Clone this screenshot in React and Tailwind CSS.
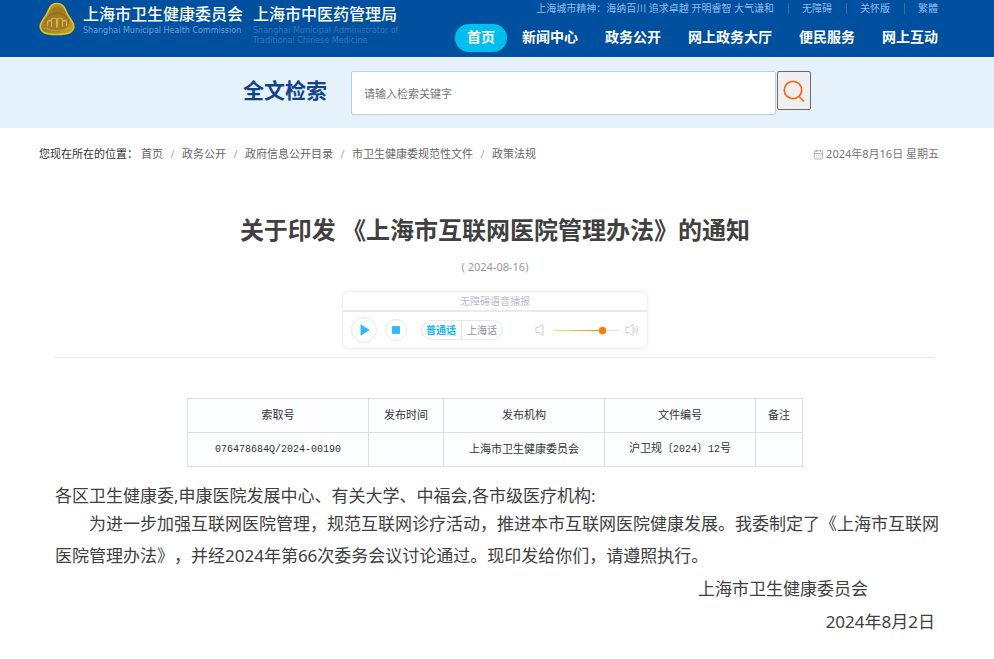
import React from "react";
import { CalendarDays } from "lucide-react";

const topLinks = ["无障碍", "关怀版", "繁體"];
const navItems = ["新闻中心", "政务公开", "网上政务大厅", "便民服务", "网上互动"];
const crumbs = ["首页", "政务公开", "政府信息公开目录", "市卫生健康委规范性文件", "政策法规"];

function Emblem() {
  return (
    <svg viewBox="0 0 36 34" className="mt-[2px] h-[34px] w-[36px] shrink-0" aria-hidden="true">
      <defs>
        <linearGradient id="gold" x1="0" y1="0" x2="1" y2="1">
          <stop offset="0" stopColor="#c9ab2a" />
          <stop offset="0.5" stopColor="#a07a22" />
          <stop offset="1" stopColor="#c9ab2a" />
        </linearGradient>
      </defs>
      <path
        d="M18 1.500C22 1.500 24.500 3.500 26 7C27.500 11 29.500 14.500 32.500 18.500C36 23 35.500 28 31 30.500C27 32.500 22 32.500 18 32.500C14 32.500 9 32.500 5 30.500C.5 28 0 23 3.500 18.500C6.500 14.500 8.500 11 10 7C11.500 3.500 14 1.500 18 1.500Z"
        fill="url(#gold)"
        stroke="#d9c71e"
        strokeWidth="1.600"
      />
      <path d="M18 5Q22 5 24 9Q28 15 30 21Q27 29 18 29.500Q9 29 6 21Q8 15 12 9Q14 5 18 5Z" fill="#a17824" />
      <path d="M6 22Q6 12 18 11Q30 12 30 22" fill="none" stroke="#8d6a1e" strokeWidth="1" />
      <path
        d="M8.500 24V19.500q2-2 4 0V25M12.500 25v-8q2.500-2 5 0v8.500M18.500 25.500V17q2.500-2 5 0v8M23.500 25v-5.500q2-2 4 0V24"
        fill="none"
        stroke="#d6b548"
        strokeWidth="1.200"
      />
      <path d="M5 26Q18 31 31 26" fill="none" stroke="#c8a436" strokeWidth="1" />
    </svg>
  );
}

function Header() {
  return (
    <header className="flex h-[57px] justify-between bg-[#0050a0] pr-14 pl-[39px] text-white">
      <a href="#home" className="flex items-start">
        <Emblem />
        <span className="ml-2 flex flex-col pt-1">
          <span className="text-[16px] leading-5 font-medium">上海市卫生健康委员会</span>
          <span className="font-['DejaVu_Sans',sans-serif] text-[8px] leading-[13px] text-[#6fa3d6]">
            Shanghai Municipal Health Commission
          </span>
        </span>
        <span className="ml-[10px] flex flex-col pt-1">
          <span className="text-[16px] leading-5 font-medium">上海市中医药管理局</span>
          <span className="pt-[2px] font-['DejaVu_Sans',sans-serif] text-[8px] leading-[10px] text-[#3474b6]">
            Shanghai Municipal Administrator of
            <br />
            Traditional Chinese Medicine
          </span>
        </span>
      </a>
      <div className="flex flex-col items-end">
        <div className="flex h-[17px] items-center text-[10px] text-[#8fbcec]">
          <span>上海城市精神：海纳百川 追求卓越 开明睿智 大气谦和</span>
          {topLinks.map((t) => (
            <span key={t} className="flex items-center">
              <span className="mr-[13px] ml-[14px] h-[11px] w-px bg-[#2f70b3]" />
              <a href="#top">{t}</a>
            </span>
          ))}
        </div>
        <nav className="mt-[7px] flex h-7 items-center text-[14px] leading-[26px] font-bold">
          <a href="#home" className="h-7 rounded-full bg-[#00bfee] px-3">
            首页
          </a>
          {navItems.map((t, i) => (
            <a key={t} href="#nav" className={i === 0 ? "ml-[15px] h-7" : "ml-[27px] h-7"}>
              {t}
            </a>
          ))}
        </nav>
      </div>
    </header>
  );
}

function SearchBar() {
  return (
    <form className="flex h-[71px] items-start bg-[#e5f2fc] pt-[14px] pl-[243px] pr-[183px]" onSubmit={(e) => e.preventDefault()}>
      <label htmlFor="q" className="mr-6 shrink-0 text-[21px] leading-[38px] font-bold text-[#10438c]">
        全文检索
      </label>
      <input
        id="q"
        type="text"
        placeholder="请输入检索关键字"
        className="h-11 min-w-0 flex-1 rounded-[2px] border border-[#b5cfec] bg-white px-3 text-[11px] outline-none placeholder:text-[#757575]"
      />
      <button
        type="submit"
        aria-label="搜索"
        className="ml-px flex h-[39px] w-[34px] shrink-0 items-center justify-center rounded-[2px] border border-[#6b6b6b] bg-[#efefef]"
      >
        <svg viewBox="0 0 22 24" className="h-6 w-[22px]" fill="none" stroke="#f26a1b" strokeWidth="1.700">
          <circle cx="10" cy="11" r="8.700" />
          <path d="M16 17.500L21 22.500" />
        </svg>
      </button>
    </form>
  );
}

function Breadcrumb() {
  return (
    <div className="flex items-center justify-between pt-4 pr-[55px] pl-[39px] text-[11px] leading-5 text-[#666]">
      <nav className="flex items-center">
        <span className="text-[#333]">您现在所在的位置：</span>
        {crumbs.map((t, i) => (
          <span key={t} className="flex">
            {i > 0 && <span className="w-[19px] text-center text-[#aaa]">/</span>}
            <a href="#crumb" className={i === 0 ? "ml-[3px]" : ""}>
              {t}
            </a>
          </span>
        ))}
      </nav>
      <span className="flex items-center gap-[2px] text-[#777]">
        <CalendarDays className="size-[11px] text-[#999]" strokeWidth={1.5} />
        2024年8月16日 星期五
      </span>
    </div>
  );
}

function Player() {
  return (
    <section className="mx-auto w-[306px] rounded-md border border-[#f1f1f4] bg-white shadow-[0_0_4px_rgba(0,0,0,0.06)]">
      <h2 className="border-b-2 border-[#e8e8ee] text-center text-[10px] leading-[18px] text-[#b9bccb]">无障碍语音播报</h2>
      <div className="flex h-[36px] items-center pl-2">
        <button aria-label="播放" className="flex size-[26px] items-center justify-center rounded-full border border-[#e6e6ec]">
          <svg viewBox="0 0 10 12" className="ml-[2px] h-3 w-[10px]">
            <path d="M1 1L9 6L1 11Z" fill="#31b9fb" stroke="#31b9fb" strokeLinejoin="round" />
          </svg>
        </button>
        <button aria-label="停止" className="ml-2 flex size-[22px] items-center justify-center rounded-full border border-[#e6e6ec]">
          <span className="size-2 rounded-[1px] bg-[#31b9fb]" />
        </button>
        <div className="ml-[14px] flex h-5 items-center rounded-full border border-[#e6e6ec] text-[10px]">
          <button className="h-full border-r border-[#e6e6ec] pr-[5px] pl-1 font-bold text-[#12b7f5]">普通话</button>
          <button className="h-full px-[5px] text-[#8d90a5]">上海话</button>
        </div>
        <svg viewBox="0 0 10 14" className="ml-8 h-[14px] w-[10px]" fill="none" stroke="#cfcfd6">
          <path d="M1 4.500H3.500L8 1.500V12.500L3.500 9.500H1Z" />
        </svg>
        <div className="ml-2 flex w-[66px] items-center">
          <span className="h-px w-[46px] bg-linear-to-r from-[#ffe45c] to-[#f58a00]" />
          <span className="size-[7px] rounded-full bg-[#ff7a00] shadow-[0_0_2px_#ff9a3c]" />
          <span className="h-px flex-1 bg-[#e2e2e8]" />
        </div>
        <svg viewBox="0 0 14 14" className="ml-[6px] size-[14px]" fill="none" stroke="#cfcfd6">
          <path d="M1 4.500H3.500L8 1.500V12.500L3.500 9.500H1ZM9.500 4.500Q11 7 9.500 9.500M11.500 3Q14 7 11.500 11" />
        </svg>
      </div>
    </section>
  );
}

function InfoTable() {
  const cell = "border border-[#dcdfe2] p-0 text-center font-normal";
  return (
    <table className="mx-auto mt-10 w-[616px] table-fixed border-collapse bg-[#fbfdff] font-['Liberation_Mono','Noto_Sans_CJK_SC',monospace] text-[11px] leading-4 text-[#333]">
      <colgroup>
        <col className="w-[181px]" />
        <col className="w-[75px]" />
        <col className="w-[161px]" />
        <col className="w-[151px]" />
        <col className="w-[47px]" />
      </colgroup>
      <thead>
        <tr className="h-[34px]">
          {["索取号", "发布时间", "发布机构", "文件编号", "备注"].map((t) => (
            <th key={t} scope="col" className={cell}>
              {t}
            </th>
          ))}
        </tr>
      </thead>
      <tbody>
        <tr className="h-[34px]">
          <td className={cell}>
            <span className="text-[10px]">076478684Q/2024-00190</span>
          </td>
          <td className={cell} />
          <td className={cell}>上海市卫生健康委员会</td>
          <td className={cell}>
            沪卫规〔<span className="text-[10px]">2024</span>〕<span className="text-[10px]">12</span>号
          </td>
          <td className={cell} />
        </tr>
      </tbody>
    </table>
  );
}

export default function App() {
  return (
    <div lang="zh-CN" className="min-h-screen bg-white font-['Noto_Sans','Noto_Sans_CJK_SC',sans-serif]">
      <Header />
      <SearchBar />
      <Breadcrumb />
      <main className="px-[55px]">
        <div className="pr-1">
          <h1 className="mt-12 text-center text-[24px] leading-9 font-bold text-[#404040]">
            关于印发 《上海市互联网医院管理办法》的通知
          </h1>
          <p className="mt-[9px] mb-[14px] text-center text-[11px] leading-5 text-[#999]">( 2024-08-16)</p>
          <Player />
          <hr className="mt-2 border-[#e8e8e8]" />
          <InfoTable />
        </div>
        <article className="mt-[17px] text-[17px] leading-8 text-[#404040] [text-spacing-trim:space-all]">
          <p className="leading-6">各区卫生健康委,申康医院发展中心、有关大学、中福会,各市级医疗机构:</p>
          <p className="indent-[2em]">
            为进一步加强互联网医院管理，规范互联网诊疗活动，推进本市互联网医院健康发展。我委制定了《上海市互联网医院管理办法》，并经2024年第66次委务会议讨论通过。现印发给你们，请遵照执行。
          </p>
          <p className="pr-[71px] text-right leading-[33px]">上海市卫生健康委员会</p>
          <p className="pr-1 text-right leading-[33px]">2024年8月2日</p>
        </article>
      </main>
    </div>
  );
}
